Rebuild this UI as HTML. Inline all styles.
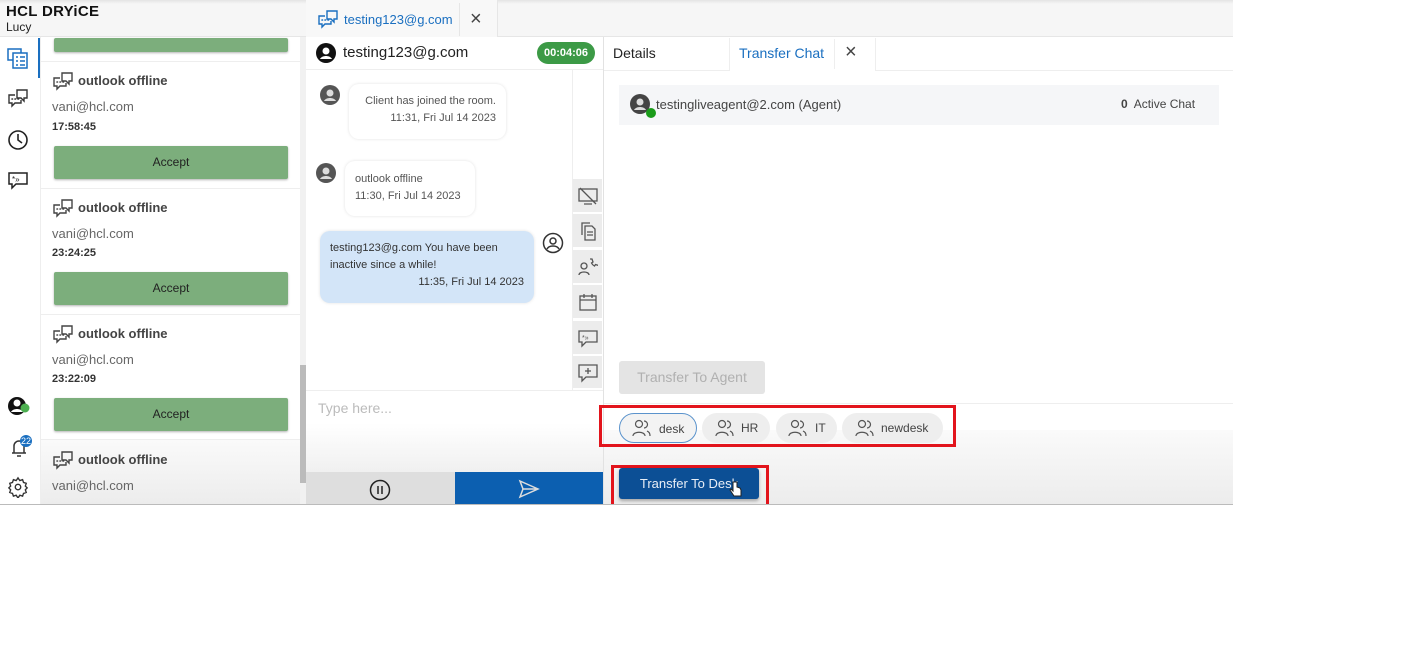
<!DOCTYPE html>
<html><head><style>
*{box-sizing:border-box;margin:0;padding:0}
body{width:1419px;height:645px;background:#fff;font-family:"Liberation Sans",Arial,sans-serif;position:relative;overflow:hidden;color:#333;white-space:nowrap}
.a{position:absolute}
.app{position:absolute;left:0;top:0;width:1233px;height:505px;background:#fff;overflow:hidden;border-bottom:1px solid #bbb}
.top{left:0;top:0;width:1233px;height:37px;background:linear-gradient(#e4e4e4,#f6f6f6 4px,#f6f6f6);border-bottom:1px solid #e6e6e6}
.t1{font-weight:bold;font-size:13px;color:#444}
.acc{left:54px;width:234px;height:33px;background:#7cae7c;box-shadow:0 1px 2px rgba(0,0,0,.3);border-radius:2px;font-size:12px;color:#222;text-align:center;line-height:33px}
.bub{background:#fff;border-radius:10px;box-shadow:0 0 3px rgba(0,0,0,.12);font-size:11px;color:#555;line-height:17px}
.side{left:573px;width:29px;height:33px;background:#ececec}
.chip{top:413px;height:30px;border-radius:15px;background:#eee;font-size:12px;color:#444;line-height:30px}
</style></head><body>
<svg width="0" height="0" style="position:absolute"><defs><g id="ch" fill="none" stroke-width="1.4"><path d="M8 7H2v8h3v3l3-3h6v-3"/><path d="M10 2h10v8h-3v3l-3-3h-4z"/><path d="M5 11h.5M8 11h.5M11 11h.5" stroke-linecap="round" stroke-width="1.6"/></g></defs></svg>
<div class="app">
<div class="a top"></div>
<div class="a" style="left:6px;top:3px;font-size:15px;font-weight:bold;color:#111;letter-spacing:.3px">HCL <span style="font-weight:900">DRYiCE</span></div>
<div class="a" style="left:6px;top:20px;font-size:12px;color:#222">Lucy</div>
<div class="a" style="left:38px;top:38px;width:3px;height:40px;background:#1a6fc0"></div>
<svg class="a" style="left:7px;top:48px" width="22" height="22" viewBox="0 0 22 22" fill="none" stroke="#1a6fc0" stroke-width="1.5"><rect x="1" y="1" width="13" height="11"/><rect x="6" y="5" width="14" height="15" fill="#fff"/><path d="M9 9h2M13 9h5M9 13h2M13 13h5M9 17h2M13 17h5"/></svg>
<svg class="a" style="left:7px;top:88px" width="22" height="22" viewBox="0 0 22 22" stroke="#333"><use href="#ch"/></svg>
<svg class="a" style="left:7px;top:129px" width="22" height="22" viewBox="0 0 22 22" fill="none" stroke="#222" stroke-width="1.6"><circle cx="11" cy="11" r="9"/><path d="M11 5v6l4 3"/></svg>
<svg class="a" style="left:7px;top:169px" width="22" height="22" viewBox="0 0 22 22" fill="none" stroke="#222" stroke-width="1.5"><path d="M2 4h18v11H9l-4 4v-4H2z"/><text x="5" y="13" font-size="8" fill="#222" stroke="none">*»</text></svg>
<svg class="a" style="left:7px;top:395px" width="24" height="22" viewBox="0 0 24 22"><circle cx="10" cy="11" r="9" fill="#111"/><circle cx="10" cy="8" r="3.5" fill="#fff"/><path d="M4 17c2-4 10-4 12 0" fill="#fff"/><circle cx="18" cy="13" r="4.5" fill="#4caf50"/></svg>
<svg class="a" style="left:7px;top:434px" width="26" height="26" viewBox="0 0 26 26" fill="none" stroke="#333" stroke-width="1.5"><path d="M5 19h14M7 19v-7a5 5 0 0110 0v7M10 22h4"/><circle cx="19" cy="7" r="6" fill="#1a6fc0" stroke="none"/><text x="14" y="10" font-size="9" fill="#fff" stroke="none" font-family="Liberation Sans">22</text></svg>
<svg class="a" style="left:7px;top:476px" width="22" height="22" viewBox="0 0 24 24" fill="none" stroke="#333" stroke-width="1.5"><circle cx="12" cy="12" r="3"/><path d="M12 2l2 3 3-1 1 3 3 1-1 3 2 2-2 2 1 3-3 1-1 3-3-1-2 3-2-3-3 1-1-3-3-1 1-3-2-2 2-2-1-3 3-1 1-3 3 1z"/></svg>
<div class="a" style="left:40px;top:37px;width:1px;height:468px;background:#eee"></div>
<div class="a acc" style="top:38px;height:14px;line-height:14px"></div>
<div class="a" style="left:41px;top:61px;width:259px;height:1px;background:#eee"></div>
<div class="a" style="left:300px;top:37px;width:6px;height:468px;background:#f1f1f1"></div>
<div class="a" style="left:300px;top:365px;width:6px;height:118px;background:#bbb"></div>
<!-- chat panel -->
<div class="a" style="left:306px;top:0;width:192px;height:37px;background:#f8f8f8;border-right:1px solid #e6e6e6"></div>
<svg class="a" style="left:317px;top:9px" width="22" height="22" viewBox="0 0 22 22" stroke="#1a6fc0"><use href="#ch"/></svg>
<div class="a" style="left:344px;top:12px;font-size:13px;color:#1a6fc0">testing123@g.com</div>
<div class="a" style="left:459px;top:3px;width:1px;height:33px;background:#e6e6e6"></div>
<div class="a" style="left:470px;top:8px;font-size:20px;color:#444">×</div>
<div class="a" style="left:306px;top:37px;width:297px;height:33px;border-bottom:1px solid #eee;background:#fff"></div>
<svg class="a" style="left:316px;top:43px" width="20" height="20" viewBox="0 0 20 20"><circle cx="10" cy="10" r="10" fill="#111"/><circle cx="10" cy="8" r="3.5" fill="#fff"/><path d="M4 16c2-4 10-4 12 0" fill="#fff"/></svg>
<div class="a" style="left:343px;top:44px;font-size:15px;color:#222">testing123@g.com</div>
<div class="a" style="left:537px;top:42px;width:58px;height:22px;border-radius:11px;background:#3c9a46;color:#fff;font-size:11px;font-weight:bold;text-align:center;line-height:22px">00:04:06</div>
<div class="a" style="left:572px;top:70px;width:1px;height:320px;background:#eee"></div>
<svg class="a" style="left:320px;top:85px" width="20" height="20" viewBox="0 0 20 20"><circle cx="10" cy="10" r="10" fill="#555"/><circle cx="10" cy="8" r="3.5" fill="#ddd"/><path d="M4 16c2-4 10-4 12 0" fill="#ddd"/></svg>
<div class="a bub" style="left:349px;top:84px;width:157px;height:55px;padding:9px 10px;text-align:right">Client has joined the room.<br>11:31, Fri Jul 14 2023</div>
<svg class="a" style="left:316px;top:163px" width="20" height="20" viewBox="0 0 20 20"><circle cx="10" cy="10" r="10" fill="#555"/><circle cx="10" cy="8" r="3.5" fill="#ddd"/><path d="M4 16c2-4 10-4 12 0" fill="#ddd"/></svg>
<div class="a bub" style="left:345px;top:161px;width:130px;height:55px;padding:10px 10px">outlook offline<br>11:30, Fri Jul 14 2023</div>
<div class="a bub" style="left:320px;top:231px;width:214px;height:72px;padding:9px 10px;background:#d3e5f8;color:#333">testing123@g.com You have been<br>inactive since a while!<br><span style="display:block;text-align:right">11:35, Fri Jul 14 2023</span></div>
<svg class="a" style="left:542px;top:232px" width="22" height="22" viewBox="0 0 22 22" fill="none" stroke="#333" stroke-width="1.5"><circle cx="11" cy="11" r="9.5"/><circle cx="11" cy="9" r="3"/><path d="M5 17c2-4 10-4 12 0"/></svg>
<div class="a side" style="top:179px"></div><div class="a side" style="top:214px"></div><div class="a side" style="top:250px"></div><div class="a side" style="top:285px"></div><div class="a side" style="top:321px"></div><div class="a side" style="top:356px;height:32px"></div>
<svg class="a" style="left:578px;top:186px" width="20" height="20" viewBox="0 0 20 20" fill="none" stroke="#555" stroke-width="1.3"><rect x="1" y="3" width="18" height="12"/><path d="M6 18h8M2 2l16 16"/></svg>
<svg class="a" style="left:578px;top:221px" width="20" height="20" viewBox="0 0 20 20" fill="none" stroke="#555" stroke-width="1.3"><path d="M4 14V2h8M7 5h7l3 3v11H7z M9 11h6M9 14h6"/></svg>
<svg class="a" style="left:578px;top:257px" width="20" height="20" viewBox="0 0 20 20" fill="none" stroke="#555" stroke-width="1.3"><circle cx="6" cy="9" r="3"/><path d="M1 18c0-4 10-4 10 0M12 2l2 0 1 3-1.5 1c.7 1.5 1.5 2.3 3 3l1-1.5 3 1"/></svg>
<svg class="a" style="left:578px;top:292px" width="20" height="20" viewBox="0 0 20 20" fill="none" stroke="#555" stroke-width="1.3"><rect x="2" y="4" width="16" height="14"/><path d="M2 8h16M6 2v4M14 2v4"/></svg>
<svg class="a" style="left:578px;top:328px" width="20" height="20" viewBox="0 0 20 20" fill="none" stroke="#555" stroke-width="1.3"><path d="M1 3h18v11H8l-4 4v-4H1z"/><text x="4" y="12" font-size="7" fill="#555" stroke="none">*»</text></svg>
<svg class="a" style="left:578px;top:363px" width="20" height="20" viewBox="0 0 20 20" fill="none" stroke="#555" stroke-width="1.3"><path d="M1 2h18v12H8l-4 4v-4H1z M10 5v6M7 8h6"/></svg>
<div class="a" style="left:306px;top:390px;width:297px;height:82px;background:linear-gradient(#fff,#fff 40%,#f0f0f0);border-top:1px solid #eee"></div>
<div class="a" style="left:318px;top:400px;font-size:14px;color:#bbb">Type here...</div>
<div class="a" style="left:306px;top:472px;width:149px;height:33px;background:#dedede"></div>
<svg class="a" style="left:369px;top:479px" width="22" height="22" viewBox="0 0 22 22" fill="none" stroke="#222" stroke-width="1.5"><circle cx="11" cy="11" r="9.5"/><path d="M9 7v8M13 7v8"/></svg>
<div class="a" style="left:455px;top:472px;width:148px;height:33px;background:#0c5fb0"></div>
<svg class="a" style="left:518px;top:479px" width="22" height="20" viewBox="0 0 22 20" fill="none" stroke="#ddd" stroke-width="1.5"><path d="M2 2l18 8-18 8 3-8z M5 10h15"/></svg>
<!-- right panel -->
<div class="a" style="left:603px;top:37px;width:1px;height:468px;background:#e2e2e2"></div>
<div class="a" style="left:604px;top:37px;width:629px;height:34px;border-bottom:1px solid #eee"></div>
<div class="a" style="left:613px;top:45px;font-size:14px;color:#222">Details</div>
<div class="a" style="left:729px;top:38px;width:147px;height:33px;background:#fff;border-left:1px solid #eee;border-right:1px solid #eee"></div>
<div class="a" style="left:739px;top:45px;font-size:14px;color:#1a6fc0">Transfer Chat</div>
<div class="a" style="left:834px;top:39px;width:1px;height:30px;background:#eee"></div>
<div class="a" style="left:845px;top:41px;font-size:20px;color:#444">×</div>
<div class="a" style="left:619px;top:85px;width:600px;height:40px;background:#f5f6f8"></div>
<svg class="a" style="left:630px;top:94px" width="28" height="26" viewBox="0 0 28 26"><circle cx="10" cy="10" r="10" fill="#444"/><circle cx="10" cy="8" r="3.5" fill="#ddd"/><path d="M4 16c2-4 10-4 12 0" fill="#ddd"/><circle cx="21" cy="19" r="5" fill="#1a9b1a"/></svg>
<div class="a" style="left:656px;top:97px;font-size:13px;color:#444">testingliveagent@2.com (Agent)</div>
<div class="a" style="left:1121px;top:97px;font-size:12px;color:#444"><b>0</b>&nbsp; Active Chat</div>
<div class="a" style="left:619px;top:361px;width:146px;height:33px;background:#e4e4e4;border-radius:3px;color:#b0b0b0;font-size:14px;text-align:center;line-height:33px">Transfer To Agent</div>
<div class="a" style="left:604px;top:403px;width:629px;height:1px;background:#eee"></div>
<div class="a" style="left:604px;top:430px;width:629px;height:75px;background:linear-gradient(#fafafa,#ececec)"></div>
<div class="a" style="left:599px;top:405px;width:357px;height:42px;border:3px solid #e2141c"></div>
<div class="a chip" style="left:619px;width:78px;border:1px solid #5b93cc;background:#f3f3f3;padding-left:39px">desk</div>
<div class="a chip" style="left:702px;width:68px;padding-left:39px">HR</div>
<div class="a chip" style="left:776px;width:61px;padding-left:39px">IT</div>
<div class="a chip" style="left:842px;width:101px;padding-left:39px">newdesk</div>
<svg class="a" style="left:632px;top:418px" width="20" height="20" viewBox="0 0 20 20" fill="none" stroke="#555" stroke-width="1.2"><circle cx="7" cy="6" r="3.5"/><path d="M1 18c0-5 12-5 12 0M12 3a3.5 3.5 0 010 7M15 13c2 1 3 2 3 5"/></svg>
<svg class="a" style="left:715px;top:418px" width="20" height="20" viewBox="0 0 20 20" fill="none" stroke="#555" stroke-width="1.2"><circle cx="7" cy="6" r="3.5"/><path d="M1 18c0-5 12-5 12 0M12 3a3.5 3.5 0 010 7M15 13c2 1 3 2 3 5"/></svg>
<svg class="a" style="left:788px;top:418px" width="20" height="20" viewBox="0 0 20 20" fill="none" stroke="#555" stroke-width="1.2"><circle cx="7" cy="6" r="3.5"/><path d="M1 18c0-5 12-5 12 0M12 3a3.5 3.5 0 010 7M15 13c2 1 3 2 3 5"/></svg>
<svg class="a" style="left:855px;top:418px" width="20" height="20" viewBox="0 0 20 20" fill="none" stroke="#555" stroke-width="1.2"><circle cx="7" cy="6" r="3.5"/><path d="M1 18c0-5 12-5 12 0M12 3a3.5 3.5 0 010 7M15 13c2 1 3 2 3 5"/></svg>
<div class="a" style="left:611px;top:465px;width:158px;height:42px;border:3px solid #e2141c"></div>
<div class="a" style="left:619px;top:468px;width:140px;height:31px;background:#0c4f95;border-radius:3px;box-shadow:0 2px 3px rgba(0,0,0,.3);color:#e8eef6;font-size:13px;text-align:center;line-height:31px">Transfer To Desk</div>
<svg class="a" style="left:729px;top:480px" width="14" height="18" viewBox="0 0 14 18"><path d="M4 2v9l-2-2-1 1 4 6h7v-6l-1-2-3-1V2z" fill="#fff" stroke="#222" stroke-width="1"/></svg>
<!-- list items -->
<svg class="a" style="left:52px;top:71px" width="22" height="22" viewBox="0 0 22 22" stroke="#444"><use href="#ch"/></svg>
<div class="a t1" style="left:78px;top:73px">outlook offline</div>
<div class="a" style="left:52px;top:99px;font-size:13px;color:#666">vani@hcl.com</div>
<div class="a" style="left:52px;top:121px;font-size:11px;color:#333;font-weight:bold">17:58:45</div>
<div class="a acc" style="top:146px">Accept</div>
<div class="a" style="left:41px;top:188px;width:259px;height:1px;background:#eee"></div>
<svg class="a" style="left:52px;top:198px" width="22" height="22" viewBox="0 0 22 22" stroke="#444"><use href="#ch"/></svg>
<div class="a t1" style="left:78px;top:200px">outlook offline</div>
<div class="a" style="left:52px;top:226px;font-size:13px;color:#666">vani@hcl.com</div>
<div class="a" style="left:52px;top:247px;font-size:11px;color:#333;font-weight:bold">23:24:25</div>
<div class="a acc" style="top:272px">Accept</div>
<div class="a" style="left:41px;top:314px;width:259px;height:1px;background:#eee"></div>
<svg class="a" style="left:52px;top:324px" width="22" height="22" viewBox="0 0 22 22" stroke="#444"><use href="#ch"/></svg>
<div class="a t1" style="left:78px;top:326px">outlook offline</div>
<div class="a" style="left:52px;top:352px;font-size:13px;color:#666">vani@hcl.com</div>
<div class="a" style="left:52px;top:373px;font-size:11px;color:#333;font-weight:bold">23:22:09</div>
<div class="a acc" style="top:398px">Accept</div>
<div class="a" style="left:41px;top:439px;width:259px;height:66px;background:linear-gradient(#fafafa,#ececec);border-top:1px solid #eee"></div>
<svg class="a" style="left:52px;top:450px" width="22" height="22" viewBox="0 0 22 22" stroke="#444"><use href="#ch"/></svg>
<div class="a t1" style="left:78px;top:452px">outlook offline</div>
<div class="a" style="left:52px;top:478px;font-size:13px;color:#666">vani@hcl.com</div>
</div>
</body></html>
